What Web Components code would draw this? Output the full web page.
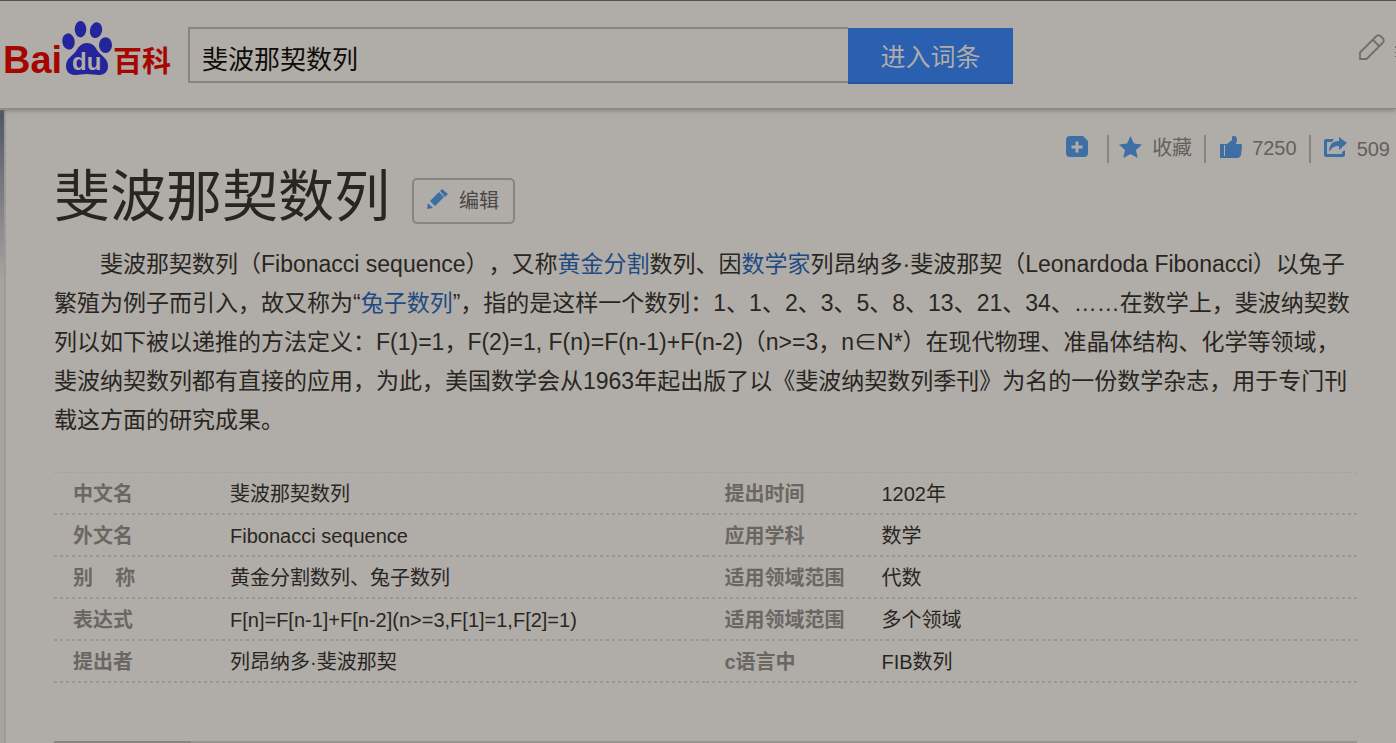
<!DOCTYPE html>
<html lang="zh-CN">
<head>
<meta charset="utf-8">
<title>斐波那契数列_百度百科</title>
<style>
html { height: 100%; }
body {
  margin: 0; min-height: 100%; background: #b0ada8; color: #292622;
  font-family: "Liberation Sans", "Noto Sans CJK SC", sans-serif;
  text-spacing-trim: space-all; overflow: hidden;
  --bg: #b0ada8; --line: #878580; --blue: #3d6fa5; --link: #1f4a82; --muted: #6a6763;
}
</style>
</head>
<body>
<baike-page></baike-page>
<script>
const define = (name, html, setup) => {
  const template = document.createElement('template');
  template.innerHTML = html;
  customElements.define(name, class extends HTMLElement {
    constructor() {
      super();
      this.attachShadow({ mode: 'open' }).append(template.content.cloneNode(true));
    }
    connectedCallback() { if (setup) setup(this.shadowRoot, this); }
  });
};

define('baike-logo', `
<style>
:host { display: block; }
a { display: block; }
svg { display: block; }
text { font-weight: 700; }
.red { fill: #a50600; }
.paw { fill: #24249c; }
.white { fill: #b0ada8; }
</style>
<a href="#" aria-label="百度百科">
<svg width="172" height="70" viewBox="3 18 172 70">
  <text class="red" x="3" y="73" font-size="38">Bai</text>
  <g class="paw">
    <ellipse cx="68.500" cy="41.500" rx="6.200" ry="8.200" transform="rotate(-8 68.500 41.500)"/>
    <ellipse cx="80.500" cy="29.200" rx="5.800" ry="8.200"/>
    <ellipse cx="96" cy="30.200" rx="6" ry="8" transform="rotate(14 96 30.200)"/>
    <ellipse cx="105.500" cy="45.200" rx="6.500" ry="7.900"/>
    <path d="M87 43c5 0 8 3 10 7 3 5 11 8 11 16 0 6-4 9-9 9-4 0-8-1-12-1s-8 1-12 1c-6 0-9-4-9-9 0-8 7-10 10-15 3-5 6-8 11-8z"/>
  </g>
  <text class="white" x="72" y="70" font-size="24">du</text>
  <text class="red" x="113" y="72" font-size="29">百科</text>
</svg>
</a>`);

define('search-box', `
<style>
:host { display: block; flex: 0 1 825px; }
form { display: flex; margin: 0; }
input {
  flex: 1; min-width: 0; height: 56px; box-sizing: border-box; border: 2px solid var(--line);
  border-right: 0; border-radius: 0; background: transparent; padding: 4px 12px 0; color: #0f0d09;
  font-family: inherit; font-size: 26px; outline: 0;
}
button {
  width: 165px; height: 56px; margin-top: 1px; border: 0; border-bottom: 2px solid #2452a0;
  background: #2b5faf; color: var(--bg); font-family: inherit; font-size: 25px; padding: 0;
}
</style>
<form role="search">
<input type="text" aria-label="搜索词条" value="斐波那契数列">
<button type="button">进入词条</button>
</form>`);

define('baike-header', `
<style>
:host {
  display: flex; align-items: flex-start; justify-content: space-between; height: 109px;
  box-sizing: border-box; border-top: 1px solid #504f56; border-bottom: 1px solid #8d8a86;
  box-shadow: 0 1px 5px #77746f; position: relative; padding-left: 3px;
}
.left { display: flex; flex: 1; gap: 13px; min-width: 0; }
baike-logo { margin-top: 17px; }
search-box { margin-top: 26px; }
.edit { margin: 32px 0 0; }
svg { display: block; }
</style>
<div class="left"><baike-logo></baike-logo><search-box></search-box></div>
<a class="edit" href="#" aria-label="编辑词条">
<svg width="38" height="30" viewBox="1358 33 38 30" fill="none" stroke="#716e6a" stroke-width="1.800" stroke-linejoin="round">
  <path d="M1360 59v-6.500l16-16q2.500-2.500 5 0l1.500 1.500q2.500 2.500 0 5l-16 16zM1373 40l6.500 6.500"/>
  <path stroke-width="1" d="M1395.500 46v2m0 4v1m0 3v1"/>
</svg></a>`);

define('action-bar', `
<style>
:host { display: flex; justify-content: flex-end; height: 28px; }
a {
  display: flex; align-items: center; gap: 10px; color: #63605c; text-decoration: none;
  font-size: 20px; line-height: 24px; padding: 0 12px 0 10px; border-left: 2px solid var(--line);
}
a:first-of-type { border: 0; padding-right: 19px; }
a:nth-of-type(3) { padding-left: 14px; }
a:last-of-type { padding: 0 6px 0 13px; }
svg { display: block; fill: var(--blue); margin-bottom: 4px; }
span { margin-bottom: 2px; }
</style>
<a href="#" aria-label="添加"><svg width="22" height="22" viewBox="0 0 22 22"><path fill-rule="evenodd" d="M4 0h13l5 5v12q0 4-4 4H4q-4 0-4-4V4q0-4 4-4zM9.500 5.500v4h-4v3h4v4h3v-4h4v-3h-4v-4z"/></svg></a>
<a href="#"><svg width="23" height="22" viewBox="0 0 23 22"><path d="M11.500 0l3.400 7.500 8.100.9-6 5.500 1.700 8.100-7.200-4.100L4.300 22 6 13.900 0 8.400l8.100-.9z"/></svg><span>收藏</span></a>
<a href="#"><svg width="22" height="22" viewBox="0 0 22 22"><path fill-rule="evenodd" d="M0 8h7l5-4V1q0-1 2-1 3 0 3 4l-1 4h5q1 0 1 2l-1 9q-1 3-4 3H0zM4 9v11h1V9z"/></svg><span>7250</span></a>
<a href="#"><svg width="23" height="21" viewBox="0 0 23 21"><path d="M10 2H2q-2 0-2 2v14q0 2 2 2h17q2 0 2-2v-5l-3 2v2H3V5h5z"/><path d="M15 0l8 6-8 7V9q-6-1-10 6Q5 4 15 4z"/></svg>509</a>`);

define('entry-title', `
<style>
:host { display: flex; align-items: flex-start; gap: 22px; }
h1 { margin: 0; font-size: 56px; line-height: 68px; font-weight: 400; color: #292622; white-space: nowrap; }
button {
  display: flex; align-items: center; gap: 11px; width: 103px; height: 46px; margin-top: 15px; padding: 0 0 3px 13px;
  border: 2px solid var(--line); border-radius: 5px; background: transparent; color: #4a4743;
  font-family: inherit; font-size: 20px; white-space: nowrap;
}
svg { display: block; fill: var(--blue); margin-bottom: 1px; }
</style>
<h1><slot></slot></h1>
<button type="button"><svg width="21" height="20" viewBox="0 0 21 20"><path d="M0 20l1-6 5 5zM3 12L12 3l5 5-9 9zM13 2l2-2 6 5-3 3z"/></svg>编辑</button>`);

define('entry-summary', `
<style>
:host { display: block; }
p { margin: 0; font-size: 23px; line-height: 39px; text-indent: 46px; }
::slotted(a) { color: var(--link); text-decoration: none; }
</style>
<p><slot></slot></p>`);

define('info-table', `
<style>
:host { display: block; }
table { width: 100%; border-collapse: collapse; table-layout: fixed; font-size: 20px; line-height: 24px; }
tr { background: repeating-linear-gradient(90deg, #9a9792 0 3px, transparent 3px 6px) 0 100% / 100% 2px no-repeat; }
th, td { height: 42px; padding: 0; box-sizing: border-box; text-align: left; white-space: pre; }
th { width: 176px; padding-left: 19px; color: var(--muted); }
</style>
<table><tbody></tbody></table>`, (root, host) => {
  const rows = host.getAttribute('rows').split('|').map(row => row.split('~'));
  root.querySelector('tbody').replaceChildren(...rows.map(([label, value]) => {
    const tr = document.createElement('tr');
    const th = document.createElement('th');
    const td = document.createElement('td');
    th.scope = 'row';
    th.textContent = label;
    td.textContent = value;
    tr.append(th, td);
    return tr;
  }));
});

define('baike-page', `
<style>
:host { display: flex; flex-direction: column; min-height: 100vh; }
.body { display: flex; flex: 1; padding-top: 1px; }
.edge {
  width: 4px; flex: none; border-right: 2px solid #9e9b96;
  background: linear-gradient(#505566, #6f727c 60px, #a6a39e 170px);
}
main { flex: 1; min-width: 0; display: flex; flex-direction: column; padding-top: 25px; }
entry-title, entry-summary, .info, .next { margin-left: 48px; margin-right: 39px; }
entry-summary { margin-top: 14px; margin-right: 38px; }
.info { display: grid; grid-template-columns: 1fr 1fr; margin-top: 32px; border-top: 1px dashed #a6a39e; }
.next { display: flex; margin-top: 58px; height: 2px; background: #999691; }
.next i { width: 137px; background: #888580; }
</style>
<baike-header></baike-header>
<div class="body">
<div class="edge"></div>
<main>
<action-bar></action-bar>
<entry-title>斐波那契数列</entry-title>
<entry-summary>斐波那契数列（Fibonacci sequence），又称<a href="#">黄金分割</a>数列、因<a href="#">数学家</a>列昂纳多·斐波那契（Leonardoda Fibonacci）以兔子繁殖为例子而引入，故又称为“<a href="#">兔子数列</a>”，指的是这样一个数列：1、1、2、3、5、8、13、21、34、……在数学上，斐波纳契数列以如下被以递推的方法定义：F(1)=1，F(2)=1, F(n)=F(n-1)+F(n-2)（n&gt;=3，n∈N*）在现代物理、准晶体结构、化学等领域，斐波纳契数列都有直接的应用，为此，美国数学会从1963年起出版了以《斐波纳契数列季刊》为名的一份数学杂志，用于专门刊载这方面的研究成果。</entry-summary>
<div class="info">
<info-table rows="中文名~斐波那契数列|外文名~Fibonacci sequence|别&#160;&#160;&#160;&#160;称~黄金分割数列、兔子数列|表达式~F[n]=F[n-1]+F[n-2](n&gt;=3,F[1]=1,F[2]=1)|提出者~列昂纳多·斐波那契"></info-table>
<info-table rows="提出时间~1202年|应用学科~数学|适用领域范围~代数|适用领域范围~多个领域|c语言中~FIB数列"></info-table>
</div>
<div class="next"><i></i></div>
</main>
</div>`);
</script>
</body>
</html>
